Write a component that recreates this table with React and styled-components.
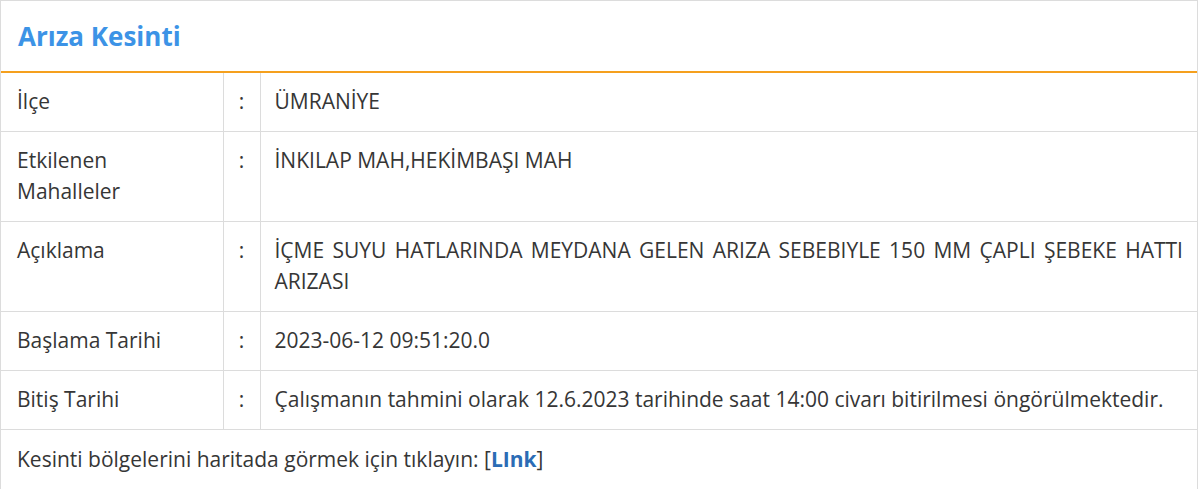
import React from "react";
import styled, { createGlobalStyle } from "styled-components";

const Global = createGlobalStyle`
  html, body { margin: 0; padding: 0; background: #fff; }
  body { font-family: "Open Sans", "Noto Sans", sans-serif; color: #363636; }
`;

const Panel = styled.section`
  width: 1198px;
  box-sizing: border-box;
  border: 1px solid #dcdcdc;
  border-bottom: none;
  background: #fff;
`;

const Header = styled.header`
  height: 70px;
  display: flex;
  align-items: center;
  padding: 0 17px;
  border-bottom: 2px solid #f5a01e;
`;

const Title = styled.h2`
  margin: 0;
  font-size: 26px;
  font-weight: 700;
  color: #3c93e6;
`;

const Table = styled.table`
  width: 100%;
  border-collapse: collapse;
  table-layout: fixed;
  font-size: 21px;
  line-height: 31px;
`;

const Row = styled.tr`
  border-bottom: 1px solid #dcdcdc;
`;

const Cell = styled.td`
  vertical-align: top;
  padding: 13px ${(p) => p.$px ?? "15px"} 14px;
  border-left: ${(p) => (p.$first ? "none" : "1px solid #dcdcdc")};
  text-align: ${(p) => p.$align || "left"};
`;

const Footer = styled.div`
  padding: 14px 16px;
  font-size: 21px;
  line-height: 31px;
`;

const Link = styled.a`
  color: #2b6cb5;
  font-weight: 700;
  text-decoration: none;
`;

const rows = [
  ["İlçe", "ÜMRANİYE"],
  ["Etkilenen Mahalleler", "İNKILAP MAH,HEKİMBAŞI MAH"],
  [
    "Açıklama",
    "İÇME SUYU HATLARINDA MEYDANA GELEN ARIZA SEBEBIYLE 150 MM ÇAPLI ŞEBEKE HATTI ARIZASI",
  ],
  ["Başlama Tarihi", "2023-06-12 09:51:20.0"],
  [
    "Bitiş Tarihi",
    "Çalışmanın tahmini olarak 12.6.2023 tarihinde saat 14:00 civarı bitirilmesi öngörülmektedir.",
  ],
];

export default function App() {
  return (
    <>
      <Global />
      <Panel>
        <Header>
          <Title>Arıza Kesinti</Title>
        </Header>
        <Table>
          <colgroup>
            <col style={{ width: "222px" }} />
            <col style={{ width: "37px" }} />
            <col />
          </colgroup>
          <tbody>
            {rows.map(([k, v]) => (
              <Row key={k}>
                <Cell $first $px="16px">{k}</Cell>
                <Cell $px="0" $align="center">:</Cell>
                <Cell $px="14px" $align="justify">{v}</Cell>
              </Row>
            ))}
          </tbody>
        </Table>
        <Footer>
          Kesinti bölgelerini haritada görmek için tıklayın: [<Link href="#">LInk</Link>]
        </Footer>
      </Panel>
    </>
  );
}
